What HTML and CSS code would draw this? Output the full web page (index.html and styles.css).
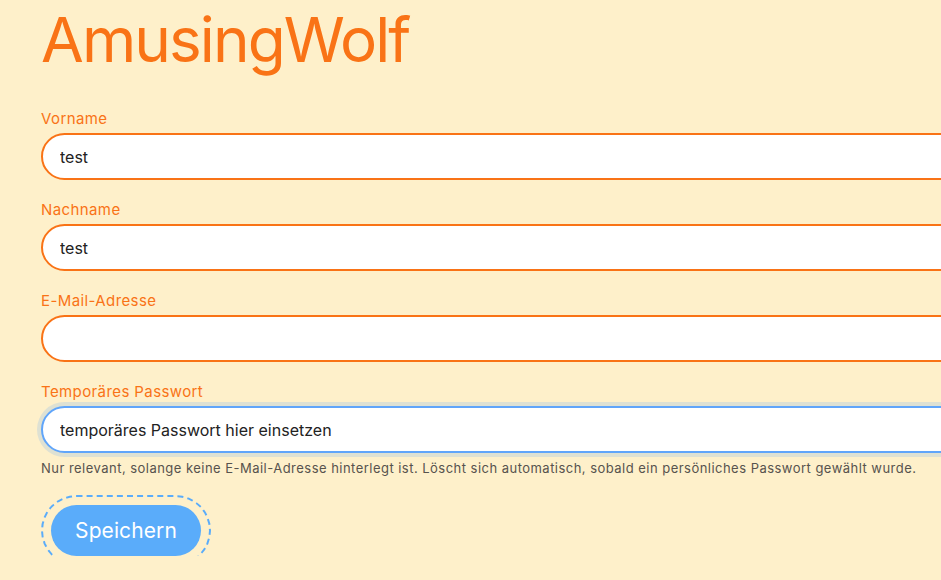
FILE: index.html
```html
<!DOCTYPE html>
<html lang="de">
<head>
  <meta charset="UTF-8" />
  <meta name="viewport" content="width=device-width, initial-scale=1.0" />
  <title>AmusingWolf</title>
  <link rel="stylesheet" href="styles.css">
</head>
<body>
  <h1>AmusingWolf</h1>
  <form id="userForm">

    <div class="field">
      <label>Vorname</label>
      <input type="text" value="test" />
    </div>

    <div class="field">
      <label>Nachname</label>
      <input type="text" value="test" />
    </div>

    <div class="field">
      <label>E-Mail-Adresse</label>
      <input type="text" value="" />
    </div>

    <div class="field">
      <label>Temporäres Passwort</label>
      <input type="text" class="focused" value="temporäres Passwort hier einsetzen" />
      <div class="hint">Nur relevant, solange keine E-Mail-Adresse hinterlegt ist. Löscht sich automatisch, sobald ein persönliches Passwort gewählt wurde.</div>
    </div>

    <button type="submit">Speichern</button>
  </form>
</body>
</html>
```

FILE: styles.css
```css
html {
  overflow: hidden;
}
body {
  font-family: 'Inter', sans-serif;
  background: #fef0ca;
  margin: 0;
  padding: 9px 0 0 41px;
  color: #222;
}
h1 {
  font-size: 62px;
  font-weight: 400;
  line-height: 62px;
  letter-spacing: -1.9px;
  margin: 0 0 37px;
  color: #f97316;
}
form {
  width: 1000px;
}
.field {
  margin-bottom: 19px;
}
label {
  display: block;
  font-size: 15px;
  line-height: 21px;
  letter-spacing: 0.4px;
  margin-bottom: 4px;
  color: #f97316;
}
input[type="text"] {
  display: block;
  box-sizing: border-box;
  width: 100%;
  height: 47px;
  padding: 0 17px;
  border: 2px solid #f97316;
  border-radius: 24px;
  background: #fff;
  font-family: 'Inter', sans-serif;
  font-size: 16px;
  color: #222;
  outline: none;
}
input.focused {
  border-color: #60a5fa;
  box-shadow: 0 0 0 4px rgba(96, 165, 250, 0.2);
}
.hint {
  margin-top: 5px;
  font-size: 13px;
  line-height: 20px;
  letter-spacing: 0.47px;
  color: #57534e;
}
button {
  margin: 8px 0 0 10px;
  width: 150px;
  height: 51px;
  font-family: 'Inter', sans-serif;
  font-size: 21px;
  letter-spacing: 0.1px;
  background: #5aacfa;
  color: #fff;
  border: none;
  border-radius: 26px;
  outline: 2px dashed #5aacfa;
  outline-offset: 8px;
  cursor: pointer;
}
```
